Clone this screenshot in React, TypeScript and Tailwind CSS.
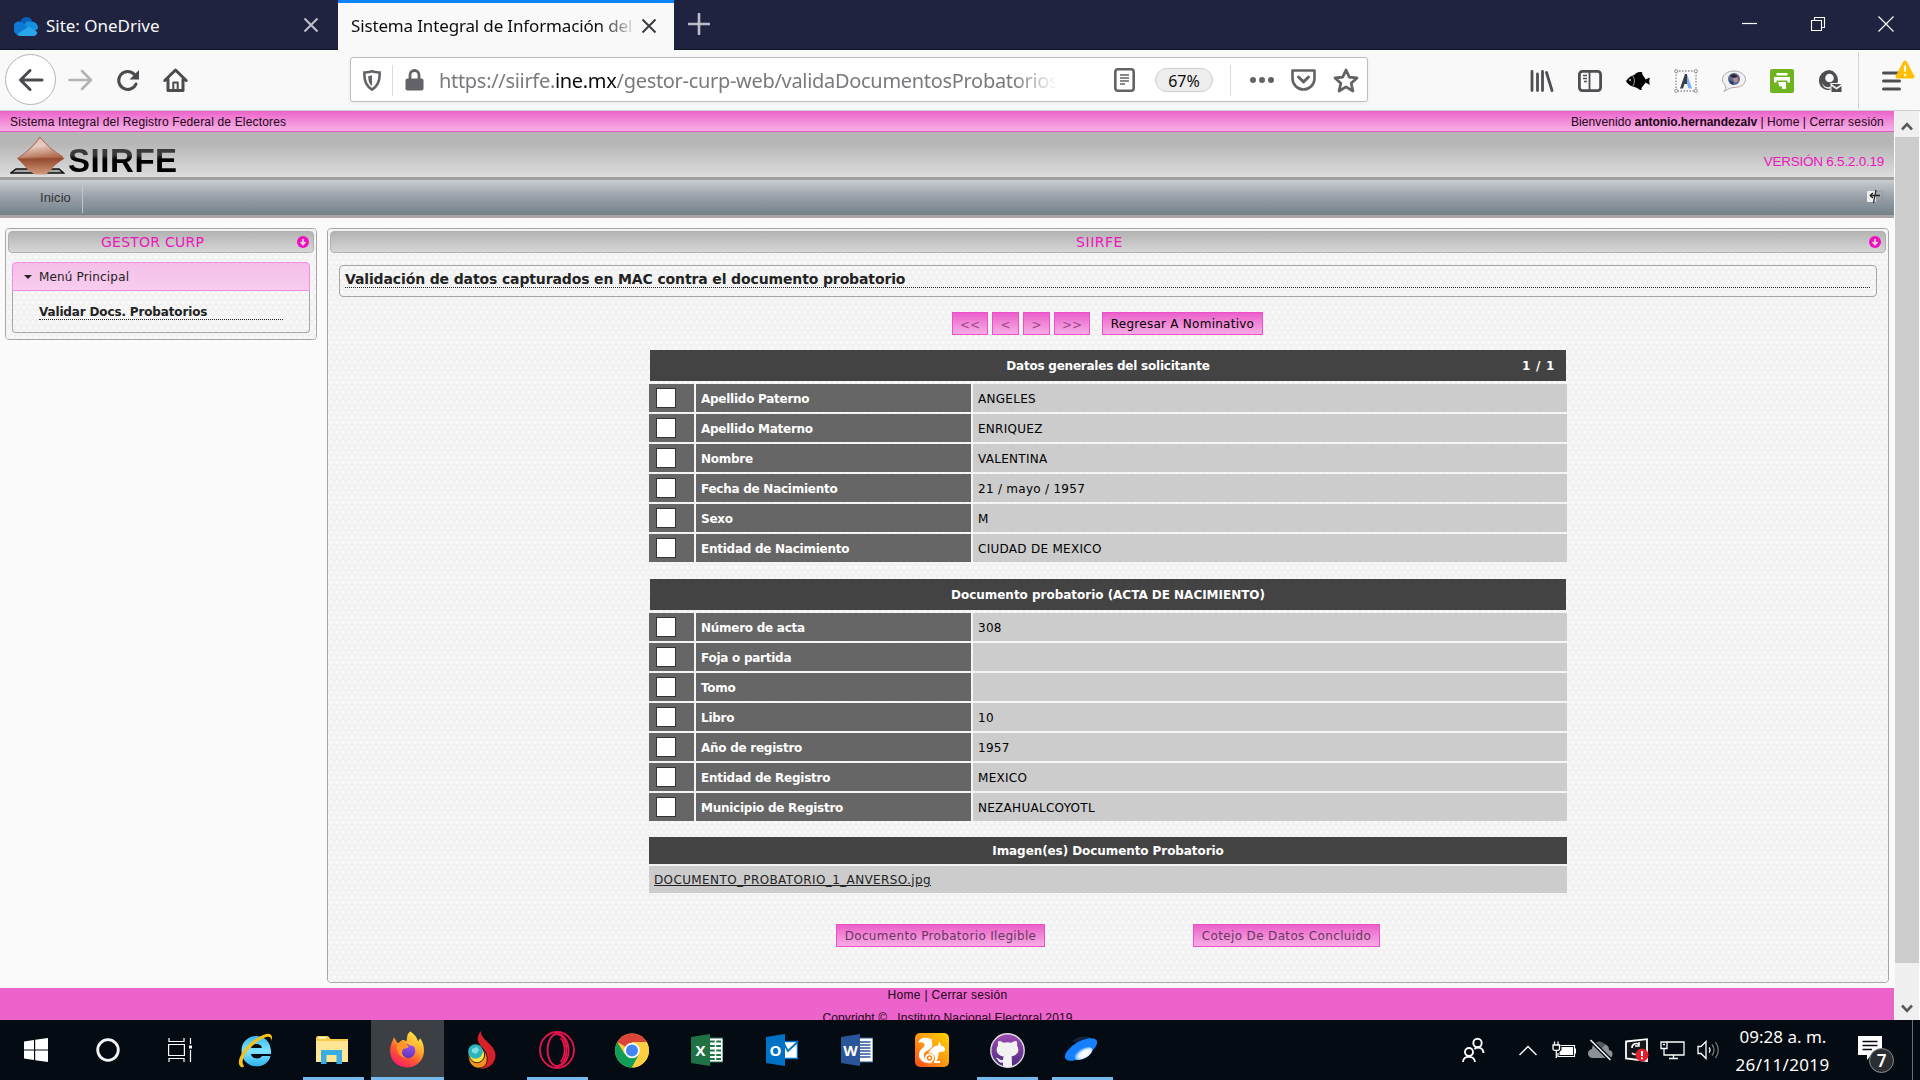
import type { ReactNode } from "react";

const verdana = "font-['DejaVu_Sans',Verdana,sans-serif] whitespace-nowrap ";
const arial = "font-['Liberation_Sans',Arial,sans-serif] whitespace-nowrap ";
const segoe = "font-['Noto_Sans','Open_Sans',sans-serif] whitespace-nowrap ";

/* ---------- shared pieces ---------- */

function Cross({ className }: { className: string }) {
  return (
    <svg className={className} viewBox="0 0 16 16" fill="none" stroke="currentColor" strokeWidth="2">
      <path d="M1.5 1.5 L14.5 14.5 M14.5 1.5 L1.5 14.5" />
    </svg>
  );
}

function Honeycomb() {
  return (
    <svg className="absolute inset-0 h-full w-full" aria-hidden="true">
      <defs>
        <pattern id="hex" width="6" height="10" patternUnits="userSpaceOnUse">
          <rect width="6" height="10" fill="#f7f7f7" />
          <path d="M0 1.67 L3 0 L6 1.67 M0 1.67 V5 M6 1.67 V5 M0 5 L3 6.67 L6 5 M3 6.67 V10" fill="none" stroke="#ebebeb" strokeWidth="0.9" />
        </pattern>
      </defs>
      <rect width="100%" height="100%" fill="url(#hex)" />
    </svg>
  );
}

function CollapseDot() {
  return (
    <svg className="h-3 w-3 shrink-0" viewBox="0 0 12 12">
      <circle cx="6" cy="6" r="6" fill="#f010c0" />
      <path d="M6 3 V8 M3.6 6 L6 8.6 L8.4 6" fill="none" stroke="#dcdcdc" strokeWidth="1.7" />
    </svg>
  );
}

function PanelHeader({ children }: { children: ReactNode }) {
  return (
    <div className="relative flex h-[22px] items-center justify-between rounded-[4px] border border-[#b0b0b0] bg-linear-to-b from-[#b4b4b4] to-[#d6d6d6] pr-[4px]">
      {children}
      <CollapseDot />
    </div>
  );
}

/* ---------- browser chrome ---------- */

function TabStrip() {
  return (
    <div className="flex h-[50px] bg-[#202340] shadow-[inset_0_-1px_0_#101228]">
      <div className="flex w-[338px] items-center pl-[14px] pr-[19px]">
        <svg className="h-[21px] w-6" viewBox="0 0 24 17" preserveAspectRatio="none">
          <path d="M6 6 A7 7 0 0 1 18.5 5 L14 10 L3 14 A4.5 4.5 0 0 1 6 6Z" fill="#0a5fb4" />
          <path d="M5 5.2 A6 6 0 0 1 9 6.5 L15 10 L4 16 A5.4 5.4 0 0 1 5 5.2Z" fill="#0f78d4" />
          <path d="M17.5 5.5 A5.5 5.5 0 0 1 24 11 L20 14 L10 8 A6 6 0 0 1 17.5 5.5Z" fill="#1490df" />
          <path d="M3 15.6 L15 9.4 L23.4 14 A4 4 0 0 1 20 17 H5.5 A5 5 0 0 1 3 15.6Z" fill="#28a8ea" />
        </svg>
        <span className={segoe + "ml-2 flex-1 text-[17px] leading-none tracking-[-0.02px] text-[#f9f9fa]"}>Site: OneDrive</span>
        <Cross className="h-[16px] w-[16px] text-[#c0c1cc]" />
      </div>
      <div className="flex w-[336px] items-center border-t-[3px] border-[#0a84ff] bg-[#f9f9fa] pl-[13px] pr-[17px] pb-[1px]">
        <span className={segoe + "w-[282px] overflow-hidden bg-linear-to-r from-[#0c0c0d] from-88% to-[#d8d8da] bg-clip-text text-[17px] leading-[24px] tracking-[-0.15px] text-transparent"}>
          Sistema Integral de Información del
        </span>
        <Cross className="ml-[9px] h-[16px] w-[16px] shrink-0 text-[#3c3c40]" />
      </div>
      <svg className="mt-[13px] ml-[14px] h-[22px] w-[22px]" viewBox="0 0 22 22">
        <path d="M11 1 V21 M1 11 H21" stroke="#bcbdc9" strokeWidth="2.6" strokeLinecap="round" />
      </svg>
      <div className="ml-auto flex h-12 items-center gap-[52px] pr-[26px]">
        <svg className="h-4 w-4" viewBox="0 0 16 16"><path d="M0 7.5 H15" stroke="#fff" strokeWidth="1.2" /></svg>
        <svg className="h-4 w-4" viewBox="0 0 16 16" fill="none" stroke="#fff" strokeWidth="1.1">
          <path d="M1.5 4.5 H11.5 V14.5 H1.5Z M4.5 4.5 V1.5 H14.5 V11.5 H11.5" />
        </svg>
        <svg className="h-4 w-4" viewBox="0 0 16 16"><path d="M0.5 0.5 L15.5 15.5 M15.5 0.5 L0.5 15.5" stroke="#fff" strokeWidth="1.2" /></svg>
      </div>
    </div>
  );
}

function NavButtons() {
  return (
    <div className="flex w-[350px] items-center pl-[5px] text-[#4a4a4f]">
      <div className="flex h-[51px] w-[51px] items-center justify-center rounded-full border border-[#b4b4b6] bg-white">
        <svg className="h-[24px] w-[26px]" viewBox="0 0 26 24" fill="none" stroke="currentColor" strokeWidth="3" strokeLinecap="round" strokeLinejoin="round">
          <path d="M24 12 H3 M12 2.5 L2.5 12 L12 21.5" />
        </svg>
      </div>
      <svg className="mt-px ml-[12px] h-[22px] w-[25px] text-[#b4b4b6]" viewBox="0 0 25 22" fill="none" stroke="currentColor" strokeWidth="2.6" strokeLinecap="round" strokeLinejoin="round">
        <path d="M1.5 11 H22 M14 2 L23 11 L14 20" />
      </svg>
      <svg className="mt-px ml-[23px] h-[23px] w-[24px]" viewBox="0 0 24 23" fill="none" stroke="currentColor" strokeWidth="3" strokeLinecap="round">
        <path d="M18.5 5.5 A9 9 0 1 0 20 15" />
        <path d="M23 1 V10.5 H13.5Z" fill="currentColor" stroke="none" />
      </svg>
      <svg className="mt-px ml-[23px] h-[25px] w-[25px]" viewBox="0 0 25 25" fill="none" stroke="currentColor" strokeWidth="3" strokeLinecap="round" strokeLinejoin="round">
        <path d="M1.8 12.5 L12.5 2 L23.2 12.5 M5 11.5 V22.5 H20 V11.5" />
        <path d="M10.3 22 V14.5 H14.7 V22" strokeWidth="2" />
      </svg>
    </div>
  );
}

function UrlBar() {
  return (
    <div className="flex h-[45px] w-[1018px] items-center rounded-[3px] border border-[#bcbcbe] bg-white pt-px pl-[12px] text-[#636367] shadow-[0_1px_4px_rgba(0,0,0,0.06)]">
      <svg className="h-[21px] w-[18px]" viewBox="0 0 18 21">
        <path d="M9 1.3 C11.5 2.2 14 2.3 16.6 2.5 C17 10 15.5 16 9 19.6 C2.5 16 1 10 1.4 2.5 C4 2.3 6.5 2.2 9 1.3Z" fill="none" stroke="currentColor" strokeWidth="2.6" />
        <path d="M9 5.2 C7.8 5.7 6.4 5.9 5.2 6 C5.2 10.5 6 14 9 16Z" fill="currentColor" />
      </svg>
      <div className="ml-[11px] h-[31px] w-px bg-[#dadadc]" />
      <svg className="ml-[12px] h-[22px] w-[19px]" viewBox="0 0 19 22">
        <path d="M5 11 V6 A4.5 4.5 0 0 1 14 6 V11" fill="none" stroke="currentColor" strokeWidth="2.8" />
        <rect x="0.5" y="9.5" width="18" height="12" rx="2" fill="currentColor" />
      </svg>
      <div className="ml-[15px] w-[618px] overflow-hidden pt-[2px] [mask-image:linear-gradient(to_right,black_93%,transparent)]">
        <span className={segoe + "text-[20px] leading-[30px] tracking-[-0.31px] text-[#7a7a7e]"}>
          https://siirfe.<span className="text-[#0c0c0d]">ine.mx</span>/gestor-curp-web/validaDocumentosProbatorios
        </span>
      </div>
      <div className="ml-auto flex items-center">
        <svg className="h-6 w-[21px]" viewBox="0 0 21 24">
          <rect x="1.3" y="1.3" width="18.4" height="21.4" rx="2.5" fill="none" stroke="currentColor" strokeWidth="2.6" />
          <path d="M6 7 H15 M6 10 H15 M6 13 H15 M6 16 H11" stroke="currentColor" strokeWidth="1.3" />
        </svg>
        <div className={segoe + "ml-[20px] flex h-[24px] w-[58px] items-center justify-center rounded-full border border-[#cfcfd1] bg-[#eeeeef] pt-px text-[16px] leading-none text-[#0c0c0d]"}>67%</div>
        <div className="ml-[17px] h-[31px] w-px bg-[#dadadc]" />
        <svg className="ml-[19px] h-2 w-6" viewBox="0 0 24 8" fill="currentColor">
          <circle cx="3" cy="4" r="3" /><circle cx="12" cy="4" r="3" /><circle cx="21" cy="4" r="3" />
        </svg>
        <svg className="ml-[17px] h-[22px] w-[25px]" viewBox="0 0 25 22" fill="none" stroke="currentColor" strokeWidth="2.6" strokeLinecap="round" strokeLinejoin="round">
          <path d="M1.5 1.5 H23.5 V9.5 A11 11 0 0 1 1.5 9.5Z" />
          <path d="M7.5 8 L12.5 12.8 L17.5 8" strokeWidth="3" />
        </svg>
        <svg className="mr-[8px] ml-[17px] h-[25px] w-[26px]" viewBox="0 0 26 25" fill="none" stroke="currentColor" strokeWidth="2.8" strokeLinejoin="round">
          <path d="M13 2 L16.3 9.2 L24 10 L18.2 15.2 L19.9 23 L13 18.9 L6.1 23 L7.8 15.2 L2 10 L9.7 9.2Z" />
        </svg>
      </div>
    </div>
  );
}

function Extensions() {
  return (
    <div className="mt-[2px] ml-auto flex items-center text-[#4f4f53]">
      <div className="flex items-center gap-6">
        <svg className="h-[22px] w-6" viewBox="0 0 24 22" fill="none" stroke="currentColor" strokeWidth="2.8" strokeLinecap="round">
          <path d="M2 1.5 V20.5 M7.5 4 V20.5 M12.5 1.5 V20.5 M16.5 2.5 L22 20.5" />
        </svg>
        <svg className="h-[22px] w-[24px]" viewBox="0 0 24 22" fill="none" stroke="currentColor">
          <rect x="1.4" y="1.4" width="21.2" height="19.2" rx="3" strokeWidth="2.8" />
          <path d="M11.5 1 V21" strokeWidth="1.8" />
          <path d="M5 5.5 H9 M5 8.5 H9 M6 11.5 H9" strokeWidth="1.3" />
        </svg>
        <svg className="h-6 w-6" viewBox="0 0 24 24">
          <path d="M0 12 C2 8.500 6 6.500 9 5.500 C10 3.500 13 2.500 16.500 3.500 C15 5 18 6.500 19.500 10.500 L24 8.500 C23 10.500 23 14 24 16 L19.500 13.500 C18 17 14 18.500 16 21 C13 21.500 12.500 19.500 10 18.500 C6 17.500 2 16 0 12Z" fill="#000" />
          <path d="M6.500 6.500 C9 10 9 14 6.500 17.500" fill="none" stroke="#ccc" strokeWidth="0.8" />
          <circle cx="4" cy="11" r="0.9" fill="#ddd" />
        </svg>
        <svg className="h-6 w-6" viewBox="0 0 24 24" fill="none">
          <rect x="2" y="2" width="20" height="20" stroke="#8d8d90" strokeWidth="1.3" strokeDasharray="1.5 1.5" />
          <g fill="#fff" stroke="#8d8d90"><circle cx="2.2" cy="2.2" r="1.6" /><circle cx="21.8" cy="2.2" r="1.6" /><circle cx="2.2" cy="21.8" r="1.6" /><circle cx="21.8" cy="21.8" r="1.6" /></g>
          <path d="M6 19.5 L11 5 H13 L13 15 H10.5 L9 19.5Z" fill="#3b3e44" />
          <path d="M13 5 L18 19.5 H14.5 L13 15 V11Z" fill="#78b0f0" />
        </svg>
        <svg className="h-6 w-6" viewBox="0 0 24 24">
          <path d="M12 2 C18.5 2 23.5 5.5 23.5 10.5 C23.5 15.5 18.5 18.5 12 18.5 C9 18.5 6 20 2 22.5 C4 20 4.5 18 3 16 C1.5 14.5 0.5 12.5 0.5 10.5 C0.5 5.5 5.5 2 12 2Z" fill="#f1f1f3" stroke="#aaa" />
          <circle cx="12" cy="10" r="6" fill="#5d6690" />
          <path d="M8 7 C10 4 15 5 15.5 8 L12 9Z" fill="#2d2530" />
          <path d="M11 9 L16 8.5 L15.5 13 L12 13.5Z" fill="#b58f8f" />
          <path d="M7 11 L12 13 L11 16 C9 15.5 7 13.5 7 11Z" fill="#23407c" />
        </svg>
        <svg className="h-6 w-6" viewBox="0 0 24 24">
          <rect width="24" height="24" rx="2" fill="#6fb41f" />
          <path d="M6.500 4 H17.500 V6.500 H6.500Z M4 8 H20 V13.500 H17.500 V11.500 H6.500 V13.500 H4Z" fill="#fff" />
          <path d="M8 13 H16 V20 H12 V17.500 H9.500Z" fill="#fff" />
        </svg>
        <svg className="h-6 w-6" viewBox="0 0 24 24">
          <path d="M11 1 A10 10 0 1 1 9 21 C4 20 1 16.5 1 11.5 A10.5 10.5 0 0 1 11 1Z" fill="currentColor" />
          <circle cx="11.5" cy="9" r="4.3" fill="#f9f9fa" />
          <path d="M4 14 C6 18 10 19 12.5 17.5 L12.5 19.500 C8 20.500 5 18 4 14Z" fill="#f9f9fa" />
          <path d="M12.500 14 H24 V24 H12.500Z" fill="#f9f9fa" />
          <path d="M13.5 15 H23.5 L18.5 18.5Z M13.5 17 L18.5 20.5 L23.5 17 V23 H13.5Z" fill="currentColor" />
        </svg>
      </div>
      <div className="-mt-px ml-[16px] h-[57px] w-px bg-[#d4d4d6]" />
      <div className="relative mr-[19px] ml-[23px]">
        <svg className="h-5 w-[19px]" viewBox="0 0 19 20" stroke="currentColor" strokeWidth="3" strokeLinecap="round">
          <path d="M1.5 2 H17.5 M1.5 10 H17.5 M1.5 18 H17.5" />
        </svg>
        <svg className="absolute -top-[11px] left-[13px] h-[19px] w-[20px]" viewBox="0 0 20 19">
          <path d="M10 0.5 C11 0.5 11.5 1 12 2 L19.3 16 C20 17.5 19 18.5 17.5 18.5 H2.5 C1 18.5 0 17.5 0.7 16 L8 2 C8.5 1 9 0.5 10 0.5Z" fill="#ffbf00" />
          <path d="M10 5.5 V11.5 M10 14 V16.3" stroke="#fff" strokeWidth="2.2" />
        </svg>
      </div>
    </div>
  );
}

/* ---------- site header ---------- */

function SiteHeader() {
  return (
    <header>
      <div className={arial + "flex h-[21px] items-center justify-between border-b border-[#e457c4] bg-linear-to-b from-[#ea62cb] to-[#f7b0e6] pt-[2px] pr-[10px] pl-[10px] text-[12px] leading-none text-[#1a0516]"}>
        <span className="tracking-[0.16px]">Sistema Integral del Registro Federal de Electores</span>
        <span className="tracking-[0.07px]">Bienvenido <b className="tracking-[-0.04px]">antonio.hernandezalv</b> | Home | <span className="tracking-[0.2px]">Cerrar sesión</span></span>
      </div>
      <div className="flex h-[48px] justify-between border-b-[3px] border-[#a09f9f] bg-linear-to-b from-[#b6b6b6] from-25% to-[#dddddd] pr-[10px] pl-[10px]">
        <div className="flex">
          <svg className="mt-[4px] h-10 w-[55px]" viewBox="0 0 55 40">
            <defs>
              <linearGradient id="gemTop" x1="0" y1="0" x2="0.3" y2="1">
                <stop offset="0" stopColor="#d9b5a8" /><stop offset="0.5" stopColor="#e6cdc4" /><stop offset="1" stopColor="#b87458" />
              </linearGradient>
              <linearGradient id="gemLow" x1="0" y1="0" x2="0" y2="1">
                <stop offset="0" stopColor="#964d30" /><stop offset="0.6" stopColor="#964d30" /><stop offset="1" stopColor="#d39a7e" />
              </linearGradient>
            </defs>
            <path d="M6 33 H49 L53.5 37 H1Z" fill="#a5a5a5" stroke="#111" strokeWidth="1.5" />
            <path d="M30 1 Q38 13 54.5 22.5 Q45 28 41 34 L36 38.5 H25 L18 34 Q13 28 7.5 22.5 Q22 13 30 1Z" fill="url(#gemLow)" />
            <path d="M30 1 Q38 12 53 21 Q28 22 7.5 22.5 Q22 13 30 1Z" fill="url(#gemTop)" stroke="#a8644c" strokeWidth="1" />
          </svg>
          <span className={arial + "mt-[11px] ml-[3px] bg-linear-to-b from-[#3a3a3a] from-35% to-black to-55% bg-clip-text text-[33px] font-bold leading-[36px] tracking-[0.55px] text-transparent"}>SIIRFE</span>
        </div>
        <span className={arial + "mt-[23px] text-[13.5px] leading-none tracking-[-0.24px] text-[#ee14be]"}>VERSIÓN 6.5.2.0.19</span>
      </div>
      <div className="flex h-[38px] justify-between border-b-[3px] border-[#a9a2a6] bg-linear-to-b from-[#c9cdd2] via-[#989fa7] to-[#74828a] pr-[11px]">
        <span className={arial + "mt-[2px] flex h-[31px] w-[83px] items-center border-r border-[#c2c5c9] pl-[40px] text-[13px] leading-none tracking-[0.1px] text-[#333]"}>Inicio</span>
        <svg className="mt-[9px] h-[15px] w-[16px]" viewBox="0 0 16 15">
          <rect x="0" y="2" width="9" height="11" rx="1" fill="#eee" />
          <path d="M3 6.5 H13 M3 6.5 L6 4 M3 6.5 L6 9 M9 1 L6.5 14" stroke="#222" strokeWidth="1.3" fill="none" />
          <path d="M10 2.5 H15.5 V12.5 H10" stroke="#8a9299" strokeDasharray="1 1" fill="none" />
        </svg>
      </div>
    </header>
  );
}

/* ---------- page body ---------- */

function Sidebar() {
  return (
    <aside className="relative h-[112px] w-[312px] overflow-hidden rounded-[4px] border border-[#a6a6a6]">
      <Honeycomb />
      <div className="relative p-[2px]">
        <PanelHeader>
          <span className={verdana + "pl-[92px] text-[14px] leading-none tracking-[0.24px] text-[#ee14be]"}>GESTOR CURP</span>
        </PanelHeader>
        <div className="mt-[9px] ml-[4px] w-[298px]">
          <div className={verdana + "flex h-[29px] items-center rounded-t-[4px] border border-[#f48de2] bg-linear-to-b from-[#f5bfe9] to-[#f8cdee] text-[12px] leading-none tracking-[0.16px] text-[#222]"}>
            <svg className="mr-[7px] ml-[11px] h-1 w-2" viewBox="0 0 8 4"><path d="M0 0 H8 L4 4Z" fill="#222" /></svg>
            Menú Principal
          </div>
          <div className="h-[42px] rounded-b-[4px] border border-t-0 border-[#a6a6a6] pt-[13px] pl-[26px]">
            <div className={verdana + "h-[16px] w-[244px] border-b border-dotted border-[#222] text-[12px] font-bold leading-[17px] tracking-[-0.15px] text-[#222]"}>
              Validar Docs. Probatorios
            </div>
          </div>
        </div>
      </div>
    </aside>
  );
}

function PinkButton({ className, children }: { className: string; children: ReactNode }) {
  return (
    <button className={verdana + "flex h-[23px] items-center justify-center border border-[#ee4fcb] bg-linear-to-b from-[#ea5fca] to-[#f6abe4] text-[12px] leading-none " + className}>
      {children}
    </button>
  );
}

function DataRow({ label, value }: { label: string; value: string }) {
  return (
    <div className="flex h-[28px] gap-[2px]">
      <div className="flex w-[45px] items-center bg-[#666666] pl-[7px]">
        <span className="h-[20px] w-[20px] border border-[#333] bg-white" />
      </div>
      <div className={verdana + "flex w-[275px] items-center bg-[#666666] pt-[2px] pl-[5px] text-[12px] font-bold leading-none tracking-[-0.26px] text-white"}>{label}</div>
      <div className={verdana + "flex flex-1 items-center bg-[#cccccc] pt-[2px] pl-[5px] text-[12px] leading-none tracking-[0.28px] text-black"}>{value}</div>
    </div>
  );
}

const applicant = [
  ["Apellido Paterno", "ANGELES"],
  ["Apellido Materno", "ENRIQUEZ"],
  ["Nombre", "VALENTINA"],
  ["Fecha de Nacimiento", "21 / mayo / 1957"],
  ["Sexo", "M"],
  ["Entidad de Nacimiento", "CIUDAD DE MEXICO"],
];

const record = [
  ["Número de acta", "308"],
  ["Foja o partida", ""],
  ["Tomo", ""],
  ["Libro", "10"],
  ["Año de registro", "1957"],
  ["Entidad de Registro", "MEXICO"],
  ["Municipio de Registro", "NEZAHUALCOYOTL"],
];

function MainPanel() {
  return (
    <main className="relative h-[755px] w-[1562px] overflow-hidden rounded-[4px] border border-[#a6a6a6]">
      <Honeycomb />
      <div className="relative p-[2px]">
        <PanelHeader>
          <span className={verdana + "w-full pr-[1px] text-center text-[14px] leading-none tracking-[0.5px] text-[#ee14be]"}>SIIRFE</span>
        </PanelHeader>
        <div className="mt-[12px] ml-[9px] h-[32px] w-[1538px] rounded-[4px] border border-[#a6a6a6] pt-[4px] pr-[6px] pl-[5px]">
          <div className={verdana + "h-[18px] border-b border-dotted border-[#222] text-[14px] font-bold leading-[18px] tracking-[-0.13px] text-[#222]"}>
            Validación de datos capturados en MAC contra el documento probatorio
          </div>
        </div>
        <div className="mt-[15px] ml-[622px] flex gap-1">
          <PinkButton className="w-[36px] pt-[2px] text-[#9a4a88]">&lt;&lt;</PinkButton>
          <PinkButton className="w-[27px] pt-[2px] text-[#9a4a88]">&lt;</PinkButton>
          <PinkButton className="w-[27px] pt-[2px] text-[#9a4a88]">&gt;</PinkButton>
          <PinkButton className="w-[36px] pt-[2px] text-[#9a4a88]">&gt;&gt;</PinkButton>
          <PinkButton className="ml-[8px] w-[161px] tracking-[0.26px] text-black">Regresar A Nominativo</PinkButton>
        </div>
        <div className="mt-[15px] ml-[319px] w-[918px]">
          <div className={verdana + "relative mx-px flex h-[31px] items-center justify-center bg-[#434343] text-[12px] font-bold leading-none tracking-[-0.23px] text-white"}>
            Datos generales del solicitante
            <span className="absolute right-[11px] tracking-[0.7px]">1 / 1</span>
          </div>
          <div className="mt-[3px] flex flex-col gap-[2px]">
            {applicant.map(([l, v]) => <DataRow key={l} label={l} value={v} />)}
          </div>
          <div className={verdana + "mx-px mt-[17px] flex h-[31px] items-center justify-center bg-[#434343] text-[12px] font-bold leading-none tracking-[-0.02px] text-white"}>
            Documento probatorio (ACTA DE NACIMIENTO)
          </div>
          <div className="mt-[3px] flex flex-col gap-[2px]">
            {record.map(([l, v]) => <DataRow key={l} label={l} value={v} />)}
          </div>
          <div className={verdana + "mt-[16px] flex h-[27px] items-center justify-center bg-[#434343] text-[12px] font-bold leading-none tracking-[-0.08px] text-white"}>
            Imagen(es) Documento Probatorio
          </div>
          <div className={verdana + "mt-[2px] flex h-[27px] items-center bg-[#cccccc] pl-[5px] text-[12px] leading-none tracking-[0.38px] text-[#222]"}>
            <span className="underline underline-offset-1">DOCUMENTO_PROBATORIO_1_ANVERSO.jpg</span>
          </div>
        </div>
        <div className="mt-[31px] ml-[506px] flex gap-[148px]">
          <PinkButton className="w-[209px] tracking-[0.32px] text-[#6b3560]">Documento Probatorio Ilegible</PinkButton>
          <PinkButton className="w-[187px] tracking-[0.35px] text-[#6b3560]">Cotejo De Datos Concluido</PinkButton>
        </div>
      </div>
    </main>
  );
}

function Scrollbar() {
  return (
    <div className="ml-px flex w-[25px] flex-col justify-between border-r border-white bg-[#f0f0f0]">
      <div className="flex h-[26px] items-center justify-center">
        <svg className="mt-[4px] h-[9px] w-[12px]" viewBox="0 0 12 9" fill="none" stroke="#5a5a5a" strokeWidth="2.6"><path d="M1 7.5 L6 2.2 L11 7.5" /></svg>
      </div>
      <div className="flex-1 bg-[#cdcdcd]" />
      <div className="flex h-[57px] items-end justify-center pb-[7px]">
        <svg className="h-[9px] w-[12px]" viewBox="0 0 12 9" fill="none" stroke="#5a5a5a" strokeWidth="2.6"><path d="M1 1.5 L6 6.8 L11 1.5" /></svg>
      </div>
    </div>
  );
}

/* ---------- taskbar ---------- */

function Office({ letter, dark, children }: { letter: string; dark: string; children: ReactNode }) {
  return (
    <svg className="mr-[2px] h-8 w-8" viewBox="0 0 32 32">
      {children}
      <path d="M0 3 L19 0 V32 L0 29Z" fill={dark} />
      <text x="9.5" y="21.5" textAnchor="middle" fontFamily="Open Sans, sans-serif" fontWeight="700" fontSize="15" fill="#fff">{letter}</text>
    </svg>
  );
}

function Slot({ w, state, children }: { w: string; state?: "open" | "active"; children: ReactNode }) {
  return (
    <div className={"relative flex h-[60px] shrink-0 items-center justify-center " + w + (state === "active" ? " bg-[#3c3f44]" : "")}>
      {children}
      {state === "open" && <div className="absolute bottom-0 h-[3px] w-[61px] bg-[#76b9ed]" />}
      {state === "active" && <div className="absolute bottom-0 h-[3px] w-full bg-[#76b9ed]" />}
    </div>
  );
}

function Taskbar() {
  return (
    <div className="flex h-[60px] bg-[#050b12]">
      <Slot w="w-[72px]">
        <svg className="h-6 w-6" viewBox="0 0 24 24" fill="#fff"><path d="M0 3.4 L10 2 V11.4 H0Z M11.2 1.8 L24 0 V11.4 H11.2Z M0 12.6 H10 V22 L0 20.6Z M11.2 12.6 H24 V24 L11.2 22.2Z" /></svg>
      </Slot>
      <Slot w="w-[72px]">
        <svg className="h-6 w-6" viewBox="0 0 24 24"><circle cx="12" cy="12" r="10.3" fill="none" stroke="#f4f4f4" strokeWidth="2.8" /></svg>
      </Slot>
      <Slot w="w-[72px]">
        <svg className="h-6 w-6" viewBox="0 0 24 24" fill="none" stroke="#fff" strokeWidth="1.2">
          <path d="M1 0 V3.5 H16 V0 M0.6 6.5 H16.4 V17.5 H0.6Z M1 24 V20.5 H16 V24 M22.5 0 V6 M22.5 12 V24" />
          <rect x="21" y="7.5" width="3" height="3" fill="#fff" stroke="none" />
        </svg>
      </Slot>
      <Slot w="w-[79px]">
        <svg className="-mt-px mr-px h-9 w-9" viewBox="0 0 36 36">
          <defs><linearGradient id="ie" x1="0" y1="0" x2="0" y2="1"><stop offset="0" stopColor="#3cb9ee" /><stop offset="0.5" stopColor="#7fe3ff" /><stop offset="1" stopColor="#2fb2ec" /></linearGradient></defs>
          <path d="M34 22 H14 C14.5 27 23 28 25 24 H33.5 C30 39 5 38 4.5 19 C4.5 -1 35.5 -2 34 22Z M14 16 H25 C24.5 10.5 14.5 10.5 14 16Z" fill="url(#ie)" fillRule="evenodd" />
          <path d="M4 35 C-3 30 8 12 22 5 C30 0 37 0 34.5 9 C34.5 3 29 4 23 8 C11 15 2 28 7 34 C6.5 35.5 5 35.5 4 35Z" fill="#f6c21a" />
        </svg>
      </Slot>
      <Slot w="w-[76px]" state="open">
        <svg className="mr-[2px] h-[28px] w-8" viewBox="0 0 32 28">
          <path d="M0 2 Q0 0 2 0 H12 L14.5 3 H32 V26 H0Z" fill="#f8cb48" />
          <path d="M0 5 H32 V26 H0Z" fill="#ffe694" /><path d="M2.5 1.8 H10" stroke="#fff" strokeWidth="1.5" />
          <path d="M5 14 H26 V28 H20.5 V19 H10.5 V28 H5Z" fill="#39ade4" />
        </svg>
      </Slot>
      <Slot w="w-[73px]" state="active">
        <svg className="-mt-[2px] mr-px h-[37px] w-[35px]" viewBox="0 0 36 37">
          <defs>
            <linearGradient id="ff" x1="0.8" y1="0" x2="0.2" y2="1"><stop offset="0" stopColor="#fff44f" /><stop offset="0.35" stopColor="#ffae2b" /><stop offset="0.65" stopColor="#ff5634" /><stop offset="1" stopColor="#f5156c" /></linearGradient>
            <linearGradient id="ffp" x1="0.5" y1="0" x2="0.3" y2="1"><stop offset="0" stopColor="#a14df2" /><stop offset="1" stopColor="#5a36b8" /></linearGradient>
          </defs>
          <path d="M21 0 C27 4 28 8 29 10 L31 7 C39 18 35 36 18 37 C2 37 -3 22 2 11 L4 6 L8 12 L11 10 C13 7 17 10 17 10 C18 5 17 3 21 0Z" fill="url(#ff)" />
          <circle cx="18.5" cy="20" r="7.5" fill="url(#ffp)" />
          <path d="M8 12 C13 10 17 12 19 15 C20 18 14 17 13 19 C11 23 14 26 17 27 C8 27 6 18 8 12Z" fill="#ff9524" />
          <path d="M17 11 C22 9 27 13 28 18 C26 15 23 14 20 14Z" fill="#ffbe3a" />
        </svg>
      </Slot>
      <Slot w="w-[75px]">
        <svg className="h-[38px] w-[30px]" viewBox="0 0 30 38">
          <path d="M14 0 C8 7 11 12 15 16 C19 20 21 27 18 33 L13 38 C22 38 28 32 28.5 25 C29 13 13 9 14 0Z" fill="#d8202a" />
          <path d="M1 23 C1 34 8 38 13 37 C22 36 22 24 16 18 C20 28 12 33 1 23Z" fill="#f3901e" stroke="#050b12" strokeWidth="0.8" />
          <path d="M1 22 C3 31 9 33 13 31 C19 28 19 20 14 17Z" fill="#ffe23a" stroke="#222" strokeWidth="1" />
          <circle cx="8.500" cy="20.500" r="7.3" fill="#2fb3bd" /><path d="M5 18 L10 16 L12 19 L9 23 L5 21Z" fill="#80dede" />
        </svg>
      </Slot>
      <Slot w="w-[77px]" state="open">
        <svg className="mr-px h-[38px] w-9" viewBox="0 0 36 38" fill="none" stroke="#e6144c" strokeWidth="1.8">
          <ellipse cx="18" cy="19" rx="17" ry="18" /><ellipse cx="18" cy="19" rx="9.5" ry="16" /><path d="M18 3 C33 4 34 34 18 35 M21.500 7 C27 13 27 25 21.500 31" />
        </svg>
      </Slot>
      <Slot w="w-[74px]">
        <svg className="mr-[2px] h-[35px] w-[34px]" viewBox="0 0 34 34">
          <circle cx="17" cy="17" r="17" fill="#ffcd40" />
          <path d="M17 17 L2.3 8.5 A17 17 0 0 1 31.7 8.5 Z" fill="#db4437" />
          <path d="M2.3 8.5 A17 17 0 0 0 17 34 L24 21 L10 21Z" fill="#0f9d58" />
          <path d="M31.7 8.5 H17 V17 L24 21 L17 34 A17 17 0 0 0 31.7 8.5Z" fill="#ffcd40" />
          <circle cx="17" cy="17" r="7.8" fill="#fff" /><circle cx="17" cy="17" r="6" fill="#4285f4" />
        </svg>
      </Slot>
      <Slot w="w-[75px]">
        <Office letter="X" dark="#1f7244">
          <path d="M18 4 H32 V28 H18Z" fill="#fff" stroke="#1f7244" />
          <path d="M19 7.5 H30 M19 12 H30 M19 16.5 H30 M19 21 H30 M19 25 H30" stroke="#1f7244" strokeWidth="1.8" />
          <path d="M24.5 5 V27" stroke="#fff" strokeWidth="1.5" />
        </Office>
      </Slot>
      <Slot w="w-[75px]">
        <Office letter="O" dark="#0072c6">
          <path d="M18 7.5 H31.5 V24.5 H18Z" fill="#fff" stroke="#0072c6" strokeWidth="1.5" />
          <path d="M18 10 L22 17 L31 8.5" fill="none" stroke="#0072c6" strokeWidth="1.8" />
        </Office>
      </Slot>
      <Slot w="w-[75px]">
        <Office letter="W" dark="#2a5699">
          <path d="M18 4 H32 V28 H18Z" fill="#fff" stroke="#2a5699" />
          <path d="M19 8 H29.5 M19 11 H29.5 M19 14 H29.5 M19 17 H29.5 M19 20 H29.5 M19 23 H29.5" stroke="#2a5699" strokeWidth="1.5" />
        </Office>
      </Slot>
      <Slot w="w-[75px]">
        <svg className="mr-[2px] h-[34px] w-[34px]" viewBox="0 0 34 34">
          <defs><linearGradient id="uc" x1="1" y1="0" x2="0" y2="1"><stop offset="0" stopColor="#ffd400" /><stop offset="0.5" stopColor="#ff9a10" /><stop offset="1" stopColor="#ff4a1c" /></linearGradient></defs>
          <rect width="34" height="34" rx="5" fill="url(#uc)" />
          <path d="M3.500 10 C4 4.500 11 3 18 7 C15 7 18.500 10 17 13.500 C15.500 17 10 17 9 21.500 C8.500 26 12 29 18 30 C9 31.500 3.500 27 4 21 C4.500 16 10 14.500 9.500 11.500 C9 9 5 8.500 3.500 10Z" fill="#fff" />
          <path d="M20.500 13 L23 12.500 L24.500 8.500 L26 12.500 C29 13 30.500 15 30 17.500 C28.500 19.500 25 18 23.500 20 C23.500 23.500 22.500 26 21.500 28 H25 V30 H18.500 C21.500 26 20.500 20.500 13.500 19.500 C15.500 16.500 17.500 14 20.500 13Z" fill="#fff" />
          <circle cx="14.500" cy="25" r="3.6" fill="none" stroke="#fff" strokeWidth="1.800" /><circle cx="14.500" cy="25" r="1.200" fill="#fff" />
        </svg>
      </Slot>
      <Slot w="w-[75px]" state="open">
        <svg className="mr-px h-[35px] w-[35px]" viewBox="0 0 35 35">
          <defs><linearGradient id="gh" x1="0" y1="0" x2="0" y2="1"><stop offset="0" stopColor="#a04db4" /><stop offset="1" stopColor="#4e2a80" /></linearGradient></defs>
          <circle cx="17.5" cy="17.5" r="16.7" fill="url(#gh)" stroke="#ddd" strokeWidth="1.4" />
          <path d="M8.5 8 C11 7.5 12.5 9 13.5 9.8 C16 9 19 9 21.5 9.8 C22.5 9 24 7.5 26.5 8 C27.5 10.5 27 12 27 12.5 C30 17 28 22.5 21.5 23.5 C22 25 22 31 22 33.5 C19 34.5 16 34.5 13 33.5 V29.5 C7.5 30.5 8.5 25.5 5.5 25 C9 24 9 28 13 27 C13 25.5 13.3 24.3 13.8 23.5 C7 22.5 5 17 8 12.5 C8 11 7.5 10 8.5 8Z" fill="#f2f2f2" />
        </svg>
      </Slot>
      <Slot w="w-[75px]" state="open">
        <svg className="mr-[3px] h-[28px] w-[34px]" viewBox="0 0 34 28">
          <defs><radialGradient id="yd" cx="0.55" cy="0.6" r="0.55"><stop offset="0" stopColor="#fff" /><stop offset="0.6" stopColor="#e6f4ff" /><stop offset="1" stopColor="#5aabff" /></radialGradient></defs>
          <path d="M8 6 C12 0 24 -1 29 3 L22 7Z" fill="#122440" />
          <ellipse cx="17" cy="13.5" rx="18" ry="8" transform="rotate(-30 17 13.5)" fill="#1480ff" />
          <ellipse cx="19.500" cy="17.500" rx="10" ry="4.8" transform="rotate(-30 19.5 17.5)" fill="url(#yd)" />
        </svg>
      </Slot>
      <div className="ml-auto flex items-center text-white">
        <svg className="h-[26px] w-[23px]" viewBox="0 0 23 26" fill="none" stroke="#fff" strokeWidth="1.9">
          <circle cx="15.5" cy="6" r="4.2" /><path d="M12.5 12 C15 9.5 21 10 21.5 16" /><circle cx="7" cy="15" r="4" /><path d="M1 25 C1 18 12.5 18 13 25" />
        </svg>
        <svg className="ml-[34px] h-[11px] w-[18px]" viewBox="0 0 18 11" fill="none" stroke="#fff" strokeWidth="1.4"><path d="M0.5 10 L9 1.5 L17.5 10" /></svg>
        <svg className="ml-[15px] h-[18px] w-[24px]" viewBox="0 0 24 18">
          <path d="M8.500 4.500 H22.5 V15.500 H6 V12" fill="none" stroke="#fff" strokeWidth="1.200" /><path d="M9.500 6 H21 V14 H7.500 V11 L9.500 9Z" fill="#fff" /><path d="M23.300 7.5 V12.5" stroke="#fff" strokeWidth="1.400" />
          <path d="M1 4 H7.5 V8 C7.5 10 1 10 1 8Z M2.5 4 V0.5 M6 4 V0.5 M4.3 9.5 V17" fill="#050b12" stroke="#fff" strokeWidth="1.3" />
        </svg>
        <svg className="ml-[12px] h-[22px] w-[25px]" viewBox="0 0 25 22">
          <path d="M5 19 A4.5 4.5 0 0 1 4 10 A7 7 0 0 1 16 5 A6 6 0 0 1 21 11 A4 4 0 0 1 20 19Z" fill="#8d9094" />
          <path d="M9 3 A6.5 6.5 0 0 1 17 6 L12 11Z" fill="#55595e" /><path d="M2.5 1 L22.5 21" stroke="#050b12" strokeWidth="4" /><path d="M2.5 1 L22.5 21" stroke="#fff" strokeWidth="1.5" />
        </svg>
        <svg className="ml-[11px] h-6 w-[25px]" viewBox="0 0 25 24">
          <path d="M2 3.5 L23 1.2 V23 L2 20.5Z" fill="#15181c" stroke="#fff" strokeWidth="1.8" />
          <path d="M8 10 A4 4 0 0 1 15 7 M15 12 A4 4 0 0 1 8 15 M15 4 V8 H11" fill="none" stroke="#fff" strokeWidth="1.6" />
          <circle cx="18" cy="17" r="6.5" fill="#e0202c" /><path d="M18 13 V18 M18 19.5 V21.2" stroke="#fff" strokeWidth="2" />
        </svg>
        <svg className="ml-[11px] h-[20px] w-[25px]" viewBox="0 0 25 20" fill="none" stroke="#fff" strokeWidth="1.3">
          <path d="M7 2 H24 V15 H4 V9 M9 18.5 H18 M13.5 15 V18.5" /><path d="M1 2 H7 V8.5 H1Z M3 4.5 H5" />
        </svg>
        <svg className="ml-[12px] h-5 w-[23px]" viewBox="0 0 23 20" fill="none" stroke="#fff" strokeWidth="1.3">
          <path d="M1 6.5 H4 L9 1.5 V18.5 L4 13.5 H1Z M12 7.5 Q14 10 12 12.5" /><path d="M15 4.5 Q19 10 15 15.5 M18.5 2 Q24 10 18.5 18" stroke="#777" />
        </svg>
        <div className={segoe + "mr-[3px] ml-[12px] flex w-[101px] flex-col items-center pt-px text-[17px] leading-[28px] text-white"}>
          <span className="pl-px">09:28 a. m.</span>
          <span className="tracking-[0.35px]">26/11/2019</span>
        </div>
        <div className="relative ml-[22px] w-[34px]">
          <svg className="-mt-[4px] h-6 w-6" viewBox="0 0 24 24"><path d="M0 0 H24 V19 H13 L9 24 V19 H0Z" fill="#fff" /><path d="M4.5 5.5 H19.5 M4.5 9.5 H19.5 M4.5 13.5 H14" stroke="#050b12" strokeWidth="1.5" /></svg>
          <div className={segoe + "absolute top-[8px] left-[11px] flex h-[25px] w-[25px] items-center justify-center rounded-full border-[1.5px] border-[#8a8d90] bg-[#2b2e31] text-[17px] font-semibold leading-none text-white"}>7</div>
        </div>
        <div className="ml-[20px] mr-[7px] h-[60px] w-px bg-[#6b6f74]" />
      </div>
    </div>
  );
}

export default function App() {
  return (
    <div className="flex h-[1080px] w-[1920px] flex-col overflow-hidden bg-[#fafafa]">
      <TabStrip />
      <div className="flex h-[61px] items-center border-b border-[#cfcfd1] bg-[#f9f9fa] pb-[1px]">
        <NavButtons />
        <UrlBar />
        <Extensions />
      </div>
      <div className="flex h-[909px]">
        <div className="flex w-[1894px] flex-col">
          <SiteHeader />
          <div className="flex h-[770px] items-start gap-[10px] pt-[10px] pl-[5px]">
            <Sidebar />
            <MainPanel />
          </div>
          <footer className={arial + "flex h-[32px] flex-col items-center overflow-hidden bg-[#ec64cb] pl-[1px] text-[12px] text-[#1a0516]"}>
            <div className="leading-[14px] tracking-[0.31px]">Home | Cerrar sesión</div>
            <div className="mt-[8px] shrink-0 leading-[16px] tracking-[0.09px]">Copyright © . Instituto Nacional Electoral 2019</div>
          </footer>
        </div>
        <Scrollbar />
      </div>
      <Taskbar />
    </div>
  );
}
